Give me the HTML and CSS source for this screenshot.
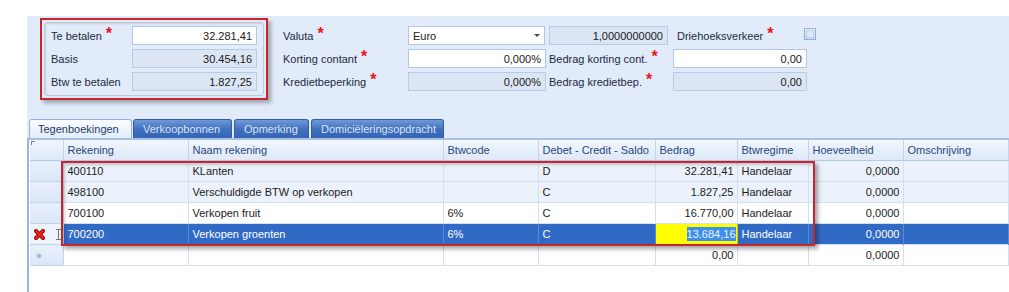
FILE: index.html
```html
<!DOCTYPE html>
<html lang="nl">
<head>
    <meta charset="UTF-8">
    <title>Verkoopboeking</title>
    <link rel="stylesheet" href="styles.css">
</head>
<body>
    <div class="screen">
        <div class="panel">
            <div class="header-form">
                <div class="totals-mark">
                    <div class="totals">
                        <span class="label">Te betalen <b class="req">*</b></span>
                        <span class="field num">32.281,41</span>
                        <span class="label">Basis</span>
                        <span class="field num readonly">30.454,16</span>
                        <span class="label">Btw te betalen</span>
                        <span class="field num readonly">1.827,25</span>
                    </div>
                </div>

                <div class="details">
                    <div class="detail-row">
                        <span class="label lbl-a">Valuta <b class="req">*</b></span>
                        <span class="field combo">Euro<i class="arrow"></i></span>
                        <span class="field num readonly rate">1,0000000000</span>
                        <span class="label lbl-c">Driehoeksverkeer <b class="req">*</b></span>
                        <span class="check"><i></i></span>
                    </div>
                    <div class="detail-row">
                        <span class="label lbl-a">Korting contant <b class="req">*</b></span>
                        <span class="field num pct">0,000%</span>
                        <span class="label lbl-b">Bedrag korting cont. <b class="req">*</b></span>
                        <span class="field num amount">0,00</span>
                    </div>
                    <div class="detail-row">
                        <span class="label lbl-a">Kredietbeperking <b class="req">*</b></span>
                        <span class="field num readonly pct">0,000%</span>
                        <span class="label lbl-b">Bedrag kredietbep. <b class="req">*</b></span>
                        <span class="field num readonly amount">0,00</span>
                    </div>
                </div>
            </div>

            <div class="tabs">
                <div class="tab active">Tegenboekingen</div>
                <div class="tab t2">Verkoopbonnen</div>
                <div class="tab t3">Opmerking</div>
                <div class="tab t4">Domiciëleringsopdracht</div>
            </div>

            <div class="grid">
                <table>
                    <colgroup>
                        <col class="c-ind">
                        <col class="c-rek">
                        <col class="c-naam">
                        <col class="c-btw">
                        <col class="c-dcs">
                        <col class="c-bedrag">
                        <col class="c-regime">
                        <col class="c-hoev">
                        <col>
                    </colgroup>
                    <thead>
                        <tr>
                            <th class="ind corner"></th>
                            <th>Rekening</th>
                            <th>Naam rekening</th>
                            <th>Btwcode</th>
                            <th>Debet - Credit - Saldo</th>
                            <th>Bedrag</th>
                            <th>Btwregime</th>
                            <th>Hoeveelheid</th>
                            <th>Omschrijving</th>
                        </tr>
                    </thead>
                    <tbody>
                        <tr class="alt">
                            <td class="ind"></td>
                            <td>400110</td>
                            <td>KLanten</td>
                            <td></td>
                            <td>D</td>
                            <td class="num">32.281,41</td>
                            <td>Handelaar</td>
                            <td class="num">0,0000</td>
                            <td></td>
                        </tr>
                        <tr class="alt">
                            <td class="ind"></td>
                            <td>498100</td>
                            <td>Verschuldigde BTW op verkopen</td>
                            <td></td>
                            <td>C</td>
                            <td class="num">1.827,25</td>
                            <td>Handelaar</td>
                            <td class="num">0,0000</td>
                            <td></td>
                        </tr>
                        <tr>
                            <td class="ind"></td>
                            <td>700100</td>
                            <td>Verkopen fruit</td>
                            <td>6%</td>
                            <td>C</td>
                            <td class="num">16.770,00</td>
                            <td>Handelaar</td>
                            <td class="num">0,0000</td>
                            <td></td>
                        </tr>
                        <tr class="selected">
                            <td class="ind">
                                <svg class="del" width="11" height="11" viewBox="0 0 11 11">
                                    <path d="M2 2 L9 9 M9 2 L2 9" stroke="#8a0c0c" stroke-width="4" stroke-linecap="round"/>
                                    <path d="M2 2 L9 9 M9 2 L2 9" stroke="#f02020" stroke-width="2.4" stroke-linecap="round"/>
                                </svg>
                                <svg class="ibeam" width="5" height="11" viewBox="0 0 5 11">
                                    <path d="M0 0.5 H5 M0 10.5 H5 M2.5 0.5 V10.5" stroke="#707880" stroke-width="1" fill="none"/>
                                </svg>
                            </td>
                            <td>700200</td>
                            <td>Verkopen groenten</td>
                            <td>6%</td>
                            <td>C</td>
                            <td class="num editing"><span class="sel">13.684,16</span></td>
                            <td>Handelaar</td>
                            <td class="num">0,0000</td>
                            <td></td>
                        </tr>
                        <tr class="new-row">
                            <td class="ind">
                                <svg width="6" height="6" viewBox="0 0 6 6">
                                    <circle cx="3" cy="3" r="2.4" fill="#a9bcd6"/>
                                </svg>
                            </td>
                            <td></td>
                            <td></td>
                            <td></td>
                            <td></td>
                            <td class="num">0,00</td>
                            <td></td>
                            <td class="num">0,0000</td>
                            <td></td>
                        </tr>
                    </tbody>
                </table>
                <div class="grid-mark"></div>
            </div>
        </div>
    </div>
</body>
</html>
```

FILE: styles.css
```css
body {
    margin: 0;
    font-family: "Liberation Sans", Arial, sans-serif;
    font-size: 11px;
    color: #1b1b1b;
    background-color: #fff;
}
.screen {
    padding: 16px 0 0 27px;
    height: 276px;
}
.panel {
    background-color: #e2ebfa;
    height: 276px;
    display: flex;
    flex-direction: column;
}

/* top form */
.header-form {
    display: flex;
    align-items: flex-start;
    padding: 2px 0 0 13px;
}
.totals-mark {
    border: 2px solid #c8262c;
    padding: 2px 2px 2px 2px;
    box-shadow: 3px 3px 4px rgba(0,0,0,0.3);
}
.totals {
    display: grid;
    grid-template-columns: 81px 125px;
    grid-auto-rows: 19px;
    row-gap: 4px;
    padding: 3px 6px 4px 6px;
    border: 1px solid #c3c8d1;
    border-radius: 3px;
    box-shadow: inset 1px 1px 2px rgba(0,0,0,0.12);
}
.label {
    display: flex;
    align-items: center;
    color: #1c2a3e;
    white-space: nowrap;
}
.req {
    color: #e8141c;
    font-size: 16px;
    line-height: 10px;
    margin-left: 4px;
    position: relative;
    top: -2px;
}
.field {
    box-sizing: border-box;
    height: 19px;
    display: flex;
    align-items: center;
    padding: 0 4px;
    background-color: #fff;
    border: 1px solid #b3c6e3;
    color: #202020;
}
.field.num {
    justify-content: flex-end;
}
.field.readonly {
    background-color: #dbe5f4;
    border-color: #b8cae5;
}
.details {
    display: flex;
    flex-direction: column;
    gap: 4px;
    margin: 8px 0 0 15px;
}
.detail-row {
    display: flex;
    align-items: center;
    height: 19px;
}
.lbl-a {
    width: 125px;
}
.lbl-b {
    width: 124px;
    margin-left: 3px;
}
.lbl-c {
    width: 127px;
    margin-left: 9px;
}
.combo {
    width: 137px;
    justify-content: space-between;
}
.arrow {
    width: 0;
    height: 0;
    border-left: 3px solid transparent;
    border-right: 3px solid transparent;
    border-top: 3px solid #3a4a62;
}
.rate {
    width: 119px;
    margin-left: 4px;
}
.pct {
    width: 138px;
}
.amount {
    width: 134px;
}
.check {
    box-sizing: border-box;
    width: 12px;
    height: 12px;
    margin-top: -3px;
    border: 1px solid #8eaedd;
    background: linear-gradient(#f4f8fe, #cfdcf0);
    display: flex;
    align-items: center;
    justify-content: center;
}
.check i {
    width: 6px;
    height: 6px;
    background-color: #dfe8f6;
    border: 1px solid #b9cbe6;
}

/* tabs */
.tabs {
    display: flex;
    gap: 1px;
    margin: 19px 0 0 2px;
    height: 19px;
}
.tab {
    box-sizing: border-box;
    height: 19px;
    padding-left: 8px;
    display: flex;
    align-items: center;
    border: 1px solid #2f5ea8;
    border-bottom: none;
    border-radius: 3px 3px 0 0;
    background: linear-gradient(#6f98d6, #3f6ebd 55%, #3665b4);
    color: #d7e3f6;
}
.tab.active {
    width: 103px;
    border-color: #93b1de;
    background: linear-gradient(#fbfdff, #e2ecfa);
    color: #1f3b66;
}
.t2 { width: 99px; padding-left: 9px; }
.t3 { width: 75px; margin-left: 1px; padding-left: 9px; }
.t4 { width: 133px; margin-left: 1px; padding-left: 9px; }

/* grid */
.grid {
    position: relative;
    flex: 1;
    background-color: #fff;
    border-left: 2px solid #98b5e0;
    border-top: 2px solid #a7c0e6;
    padding-left: 1px;
}
table {
    width: 100%;
    table-layout: fixed;
    border-collapse: collapse;
}
.c-ind { width: 33px; }
.c-rek { width: 125px; }
.c-naam { width: 255px; }
.c-btw { width: 95px; }
.c-dcs { width: 117px; }
.c-bedrag { width: 82px; }
.c-regime { width: 71px; }
.c-hoev { width: 95px; }
th, td {
    height: 20px;
    padding: 0 4px;
    text-align: left;
    white-space: nowrap;
    overflow: hidden;
    border: 1px solid #d3e0f3;
}
th {
    font-weight: normal;
    color: #27477a;
    background: linear-gradient(#f1f6fd, #dde8f7);
    border-color: #c3d5ee;
    border-top: none;
    border-bottom-color: #b5c9e8;
}
th:first-child, td:first-child {
    border-left: none;
}
td.num {
    text-align: right;
    padding-right: 3px;
}
td.ind {
    background: linear-gradient(#e9f0fb, #dbe6f6);
    border-color: #c3d5ee;
    padding: 0 0 0 3px;
}
th.corner {
    position: relative;
}
th.corner::before {
    content: "";
    position: absolute;
    left: 1px;
    top: 1px;
    width: 3px;
    height: 3px;
    border-left: 1px solid #7c8796;
    border-top: 1px solid #7c8796;
}
tr.alt td {
    background-color: #ecf2fb;
}
tr.alt td.ind {
    background: linear-gradient(#e9f0fb, #dbe6f6);
}
tr.selected td {
    background-color: #316ac5;
    color: #fff;
    border-color: #5c8ad2;
    border-top: 1px dotted #c4d6f2;
    border-bottom: 1px dotted #c4d6f2;
}
tr.selected td.ind {
    background: #eef3fb;
    border-color: #c3d5ee;
    padding-left: 4px;
}
.del {
    vertical-align: middle;
}
.ibeam {
    vertical-align: middle;
    margin-left: 8px;
}
tr.selected td.editing {
    background-color: #ffff00;
    border: 1px solid #c9c900;
    padding-right: 1px;
}
.sel {
    background-color: #3d8ef0;
    color: #e9f3ff;
    padding: 1px 0;
}
tr.new-row td.ind svg {
    margin-left: 3px;
    vertical-align: middle;
}
.grid-mark {
    position: absolute;
    left: 32px;
    top: 21px;
    width: 754px;
    height: 85px;
    box-sizing: border-box;
    border: 2px solid #c8262c;
    box-shadow: 3px 3px 4px rgba(0,0,0,0.35), inset 2px 2px 3px rgba(0,0,0,0.18);
    pointer-events: none;
}
```
